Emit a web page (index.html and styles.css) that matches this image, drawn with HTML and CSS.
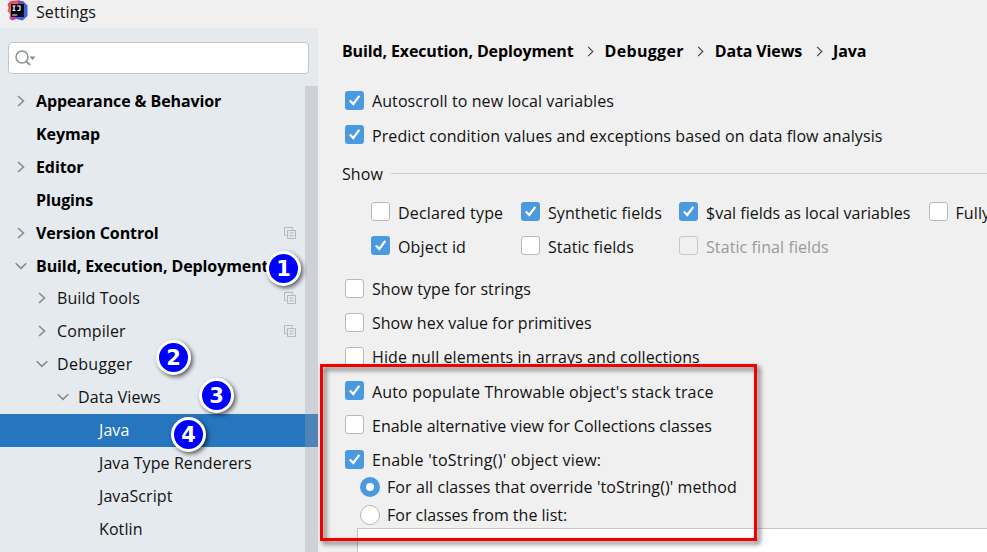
FILE: index.html
```html
<!DOCTYPE html>
<html lang="en">
<head>
<meta charset="utf-8">
<title>Settings</title>
<link rel="stylesheet" href="styles.css">
</head>
<body>
<svg class="defs" aria-hidden="true">
  <defs>
    <linearGradient id="warm" x1="0" y1="0" x2="0.6" y2="1"><stop offset="0" stop-color="#e8344e"/><stop offset=".45" stop-color="#f0605a"/><stop offset="1" stop-color="#b52ad0"/></linearGradient>
    <linearGradient id="cool" x1="0" y1="0" x2="1" y2="1"><stop offset="0" stop-color="#7a3bb5"/><stop offset=".5" stop-color="#3865e0"/><stop offset="1" stop-color="#4b55d8"/></linearGradient>
  </defs>
  <symbol id="right" viewBox="0 0 12 12"><path d="M3 1 8.5 6 3 11" fill="none" stroke="#858a8e" stroke-width="1.6"/></symbol>
  <symbol id="down" viewBox="0 0 12 12"><path d="M.7 3.2 6 8.4l5.300-5.200" fill="none" stroke="#858a8e" stroke-width="1.600"/></symbol>
  <symbol id="copy" viewBox="0 0 12 12"><path d="M2.500 8.500H.5V.5h8v2M3.500 3.500h8v8h-8zM5.300 6h4.500M5.300 8.800h4.500" fill="none" stroke="#aeb9c0" stroke-width="1"/></symbol>
  <symbol id="tick" viewBox="0 0 19 19"><path d="M4.800 9.500 8.300 13 14.300 4.900" fill="none" stroke="#fff" stroke-width="2.300"/></symbol>
</svg>
<header class="titlebar">
  <svg class="logo" viewBox="0 0 21 21"><path d="M.5 4 4 1l9-1 2 9-3 9-7 2.500-2.500-2L3 14 .5 11l1-3z" fill="url(#warm)"/><path d="M11 1h5l4.500 4.500V16l-5 4.500-6-1.500z" fill="url(#cool)"/><rect x="4" y="4" width="13" height="13" fill="#080810"/><path d="M5.500 6h3M7 6v4.500M5.500 10.500h3M10 6h3v3.500q0 1-1 1h-1.500" fill="none" stroke="#fff" stroke-width="1.200"/><path d="M5.200 15h5" stroke="#fff" stroke-width="1"/></svg>
  <span>Settings</span>
</header>
<div class="window">
  <aside class="sidebar">
    <div class="search"><svg viewBox="0 0 22 16"><circle cx="7" cy="7" r="6" fill="none" stroke="#8b9195" stroke-width="1.500"/><path d="m11.300 11.300 3.700 3.700" stroke="#8b9195" stroke-width="1.800"/><path d="M14.500 6.500h6L17.500 10z" fill="#858b8f"/></svg></div>
    <div class="treewrap">
      <nav class="tree">
        <div class="node top"><svg class="arrow"><use href="#right"/></svg><span>Appearance &amp; Behavior</span></div>
        <div class="node top"><i class="arrow"></i><span>Keymap</span></div>
        <div class="node top"><svg class="arrow"><use href="#right"/></svg><span>Editor</span></div>
        <div class="node top"><i class="arrow"></i><span>Plugins</span></div>
        <div class="node top"><svg class="arrow"><use href="#right"/></svg><span>Version Control</span><svg class="copy"><use href="#copy"/></svg></div>
        <div class="node top"><svg class="arrow"><use href="#down"/></svg><span>Build, Execution, Deployment</span></div>
        <div class="node l2"><svg class="arrow"><use href="#right"/></svg><span>Build Tools</span><svg class="copy"><use href="#copy"/></svg></div>
        <div class="node l2"><svg class="arrow"><use href="#right"/></svg><span>Compiler</span><svg class="copy"><use href="#copy"/></svg></div>
        <div class="node l2"><svg class="arrow"><use href="#down"/></svg><span class="wide">Debugger</span></div>
        <div class="node l3"><svg class="arrow"><use href="#down"/></svg><span>Data Views</span></div>
        <div class="node l4 selected"><i class="arrow"></i><span>Java</span></div>
        <div class="node l4"><i class="arrow"></i><span>Java Type Renderers</span></div>
        <div class="node l4"><i class="arrow"></i><span>JavaScript</span></div>
        <div class="node l4"><i class="arrow"></i><span>Kotlin</span></div>
      </nav>
      <div class="scrollbar"></div>
    </div>
  </aside>
  <main class="content">
    <div class="crumbs"><span>Build, Execution, Deployment</span><i></i><span class="wide">Debugger</span><i></i><span>Data Views</span><i></i><span>Java</span></div>
    <label class="option"><svg class="box on"><use href="#tick"/></svg><span>Autoscroll to new local variables</span></label>
    <label class="option"><svg class="box on"><use href="#tick"/></svg><span>Predict condition values and exceptions based on data flow analysis</span></label>
    <div class="section"><span>Show</span><hr></div>
    <div class="grid">
      <label class="option"><i class="box"></i><span class="loose">Declared type</span></label>
      <label class="option"><svg class="box on"><use href="#tick"/></svg><span>Synthetic fields</span></label>
      <label class="option"><svg class="box on"><use href="#tick"/></svg><span class="tight">$val fields as local variables</span></label>
      <label class="option"><i class="box"></i><span>Fully</span></label>
      <label class="option"><svg class="box on"><use href="#tick"/></svg><span class="loose">Object id</span></label>
      <label class="option"><i class="box"></i><span>Static fields</span></label>
      <label class="option disabled"><i class="box"></i><span>Static final fields</span></label>
    </div>
    <label class="option"><i class="box"></i><span>Show type for strings</span></label>
    <label class="option"><i class="box"></i><span class="tight">Show hex value for primitives</span></label>
    <label class="option"><i class="box"></i><span>Hide null elements in arrays and collections</span></label>
    <label class="option"><svg class="box on"><use href="#tick"/></svg><span class="loose">Auto populate Throwable object's stack trace</span></label>
    <label class="option"><i class="box"></i><span class="tight">Enable alternative view for Collections classes</span></label>
    <label class="option"><svg class="box on"><use href="#tick"/></svg><span class="looser">Enable 'toString()' object view:</span></label>
    <label class="option sub"><i class="radio on"></i><span>For all classes that override 'toString()' method</span></label>
    <label class="option sub"><i class="radio"></i><span class="tight">For classes from the list:</span></label>
    <div class="list"></div>
  </main>
</div>
<div class="frame"></div>
<div class="badge b1">1</div>
<div class="badge b2">2</div>
<div class="badge b3">3</div>
<div class="badge b4">4</div>
</body>
</html>
```
FILE: styles.css
```css
* { box-sizing: border-box; }
body { margin: 0; width: 987px; height: 552px; overflow: hidden; position: relative; background: #f0f0f0; color: #111; font: 16px/24px "Open Sans", "Noto Sans", sans-serif; letter-spacing: .09px; }
.defs { position: absolute; width: 0; height: 0; }
.titlebar { height: 28px; display: flex; align-items: flex-start; padding-left: 7px; gap: 8px; }
.logo { width: 21px; height: 21px; }
.window { display: flex; height: 524px; }
.sidebar { width: 318px; flex: none; background: #e5eaee; display: flex; flex-direction: column; }
.search { flex: none; width: 301px; height: 32px; margin: 14px 0 0 8px; border: 1.500px solid #c3c5c7; border-radius: 4px; background: #fff; padding: 7px 0 0 6px; }
.search svg { display: block; width: 22px; height: 16px; }
.treewrap { display: flex; flex: 1; padding-top: 12px; }
.tree { width: 318px; flex: none; margin-top: -1.300px; }
.scrollbar { width: 13px; margin-left: -13px; background: rgba(160, 160, 170, .34); height: 466px; flex: none; }
.node { height: 32.900px; display: flex; align-items: center; white-space: nowrap; padding-left: 15px; }
.arrow { width: 12px; height: 12px; flex: none; margin-right: 9px; }
.copy { width: 12px; height: 12px; margin: 0 22px 0 auto; }
.top { font-weight: 700; color: #000; letter-spacing: -.1px; }
.l2 { padding-left: 36px; }
.l3 { padding-left: 57px; }
.l4 { padding-left: 78px; }
.selected { background: #2675bf; color: #fff; }
.content { flex: 1; min-width: 0; padding: 11px 0 0 342px; margin-left: -318px; overflow: hidden; }
.crumbs { display: flex; height: 44.300px; font-weight: 700; color: #000; white-space: nowrap; letter-spacing: -.13px; }
.crumbs i { width: 31px; height: 24px; display: flex; align-items: center; justify-content: center; }
.crumbs i::before { content: ""; width: 6px; height: 6px; margin-left: -1px; border: solid #333; border-width: 1.500px 1.500px 0 0; transform: rotate(45deg); }
.wide { letter-spacing: .3px; }
.option { height: 34.200px; padding-left: 3px; display: flex; align-items: center; white-space: nowrap; }
.option span { padding-top: 2px; }
.tight { letter-spacing: .01px; }
.loose { letter-spacing: .16px; }
.looser { letter-spacing: .24px; }
.box { width: 19px; height: 19px; flex: none; margin-right: 8px; border: 1.500px solid #b9b9b9; border-radius: 3px; background: #fff; }
.box.on { border: 0; background: #4a9ae1; }
.disabled { color: #999; }
.disabled .box { background: #f0f0f0; border-color: #c8c8c8; }
.section { display: flex; align-items: center; height: 43px; gap: 8px; }
.section span { padding-top: 1px; }
.section hr { flex: 1; margin: 0; border: 0; border-top: 1px solid #cdcdcd; }
.grid { display: grid; width: 760px; margin-left: 26px; grid-template-columns: 150px 158px 249.500px auto; height: 76.300px; align-content: start; }
.sub { height: 27.500px; padding-left: 18px; position: relative; top: -2.500px; }
.sub span { padding-top: 0; }
.radio { width: 20px; height: 20px; flex: none; margin-right: 7px; border: 1px solid #b5b5b5; border-radius: 50%; background: #fff; }
.radio.on { border: 6.500px solid #4a9ae1; }
.list { height: 60px; margin: -3px -2px 0 15px; border: 1px solid #c6c6c6; background: #fff; }
.frame { position: absolute; left: 320px; top: 363.500px; width: 437px; height: 177.500px; border: 3.500px solid #f00000; filter: drop-shadow(3px 3px 2.500px rgba(0, 0, 0, .6)); }
.badge { position: absolute; width: 35px; height: 35px; border: 3px solid #fff; border-radius: 50%; background: #00f; color: #fff; font: bold 21px/31px "DejaVu Sans", sans-serif; letter-spacing: 0; text-align: center; box-shadow: 2px 2px 4px rgba(0, 0, 0, .6); }
.b1 { left: 266px; top: 251px; }
.b2 { left: 156px; top: 340px; }
.b3 { left: 199px; top: 378px; }
.b4 { left: 171px; top: 417px; }
```
